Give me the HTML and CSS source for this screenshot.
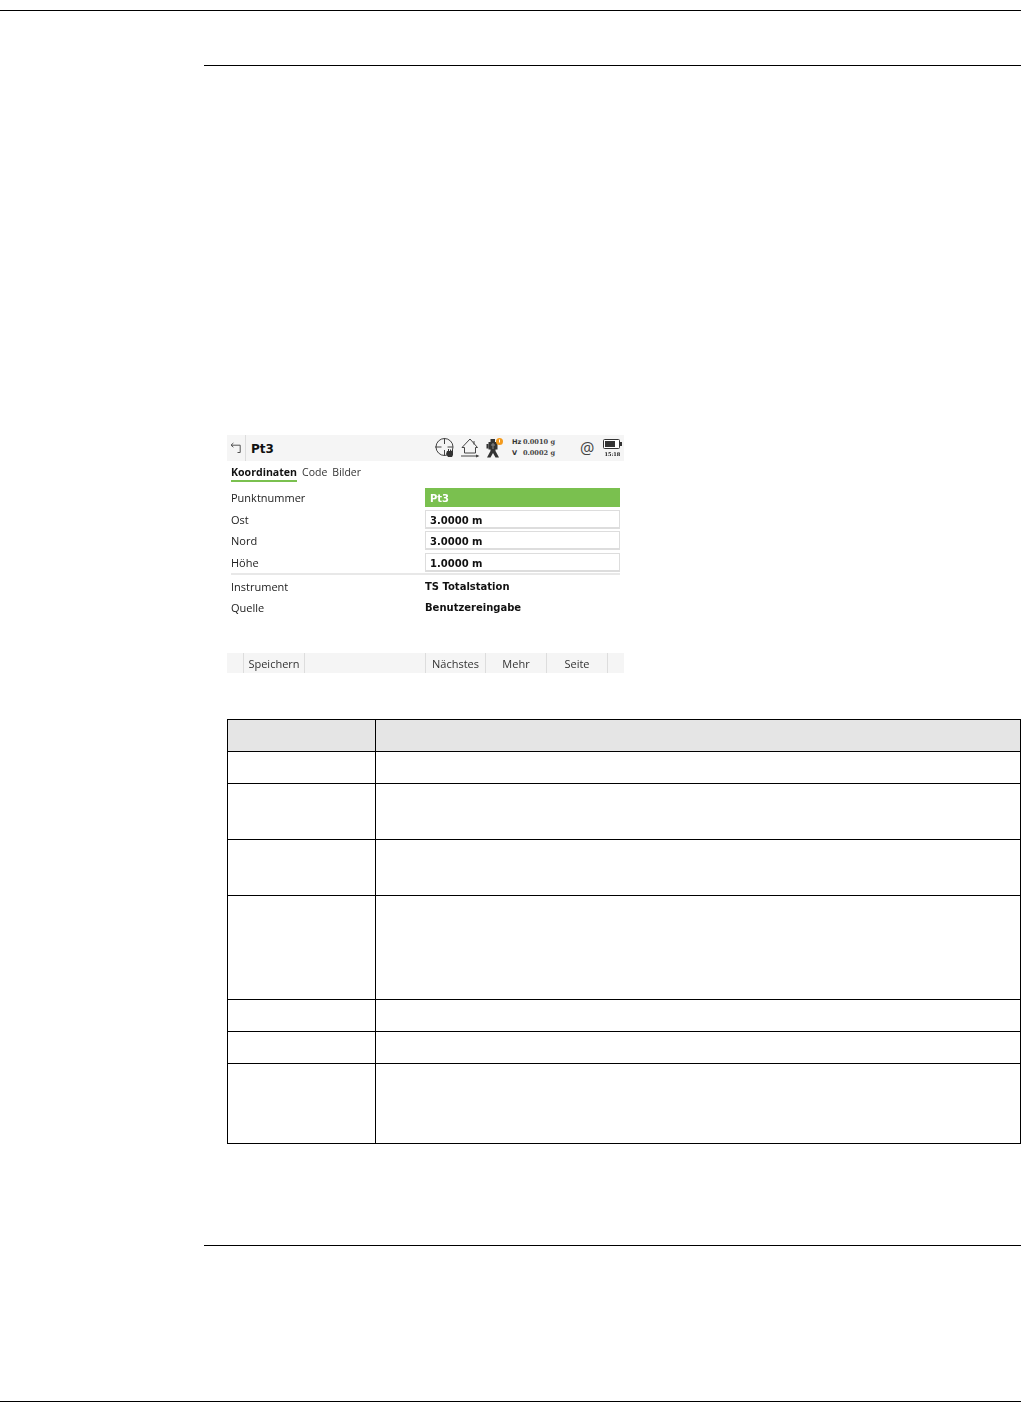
FILE: index.html
```html
<!DOCTYPE html>
<html lang="de">
<head>
<meta charset="utf-8">
<title>Pt3</title>
<link rel="stylesheet" href="styles.css">
</head>
<body>
<div class="page">
  <div class="top-rule"></div>
  <main class="content">
    <section class="screen">
      <header class="titlebar">
        <svg class="back-icon" width="12" height="12" viewBox="0 0 12 12"><path d="M1 3.200H10.200V10.500H7.500M1 3.200L3.400 1M1 3.200L3.400 5.200" fill="none" stroke="#555" stroke-width="1"/></svg>
        <h1 class="title">Pt3</h1>
        <div class="status">
          <svg class="ico-target" width="22" height="20" viewBox="0 0 22 20"><circle cx="9.500" cy="9" r="8.500" fill="none" stroke="#444" stroke-width="1"/><path d="M9.500 0V6M9.500 12V18M0 9H6.500M12.500 9H18" stroke="#444" stroke-width="1"/><path d="M12 13h1v-2h1v2h1v-1.500h1V13h1v-1h1v5l-1 2h-4l-2-3z" fill="#333"/></svg>
          <svg class="ico-home" width="20" height="20" viewBox="0 0 20 20"><path d="M2 9.500L10 1L17.500 9.500H15.500V15H4.500V9.500Z M14 3V6.500" fill="none" stroke="#444" stroke-width="1"/><path d="M1 18H18" stroke="#444" stroke-width="1"/><path d="M16 16.500L19.500 18L16 19.500Z" fill="#444"/></svg>
          <svg class="ico-station" width="20" height="20" viewBox="0 0 20 20"><path d="M4.500 1H9V4H11.500V11.500H9.500V13L13 19.500H9.500L7 15L4.500 19.500H1L4.500 13V11.500H2.500V4H4.500Z" fill="#333"/><rect x="0.500" y="6" width="2" height="4.500" fill="#333"/><path d="M7 5V11M5 7H9" stroke="#888" stroke-width="1"/><circle cx="13.500" cy="3.500" r="3.500" fill="#f39a1d"/><rect x="13" y="1.500" width="1" height="3" fill="#fff"/></svg>
          <div class="angles">
            <div class="angle"><span class="angle-label">Hz</span><span>0.0010 g</span></div>
            <div class="angle"><span class="angle-label">V</span><span>0.0002 g</span></div>
          </div>
          <span class="at">@</span>
          <div class="battery-box">
            <svg width="19" height="10" viewBox="0 0 19 10"><rect x="0.500" y="0.500" width="16" height="9" rx="1" fill="#fff" stroke="#333"/><rect x="2" y="2" width="10" height="6" fill="#333"/><rect x="17" y="3" width="2" height="4" fill="#333"/></svg>
            <span class="clock">15:18</span>
          </div>
        </div>
      </header>
      <nav class="tabs">
        <span class="tab tab-active">Koordinaten</span>
        <span class="tab">Code</span>
        <span class="tab">Bilder</span>
      </nav>
      <div class="form">
        <div class="row"><span class="label">Punktnummer</span><span class="field field-active">Pt3</span></div>
        <div class="row"><span class="label">Ost</span><span class="field">3.0000 m</span></div>
        <div class="row"><span class="label">Nord</span><span class="field">3.0000 m</span></div>
        <div class="row"><span class="label">Höhe</span><span class="field">1.0000 m</span></div>
      </div>
      <div class="separator"></div>
      <div class="info">
        <div class="row"><span class="label">Instrument</span><span class="value">TS Totalstation</span></div>
        <div class="row"><span class="label">Quelle</span><span class="value">Benutzereingabe</span></div>
      </div>
      <footer class="softkeys">
        <span class="key key-save">Speichern</span>
        <span class="key-gap"></span>
        <span class="key key-next">Nächstes</span>
        <span class="key">Mehr</span>
        <span class="key">Seite</span>
      </footer>
    </section>
    <table class="params">
      <colgroup><col class="col-a"><col class="col-b"></colgroup>
      <thead><tr class="r-head"><th></th><th></th></tr></thead>
      <tbody>
        <tr class="r-1"><td></td><td></td></tr>
        <tr class="r-2"><td></td><td></td></tr>
        <tr class="r-2"><td></td><td></td></tr>
        <tr class="r-4"><td></td><td></td></tr>
        <tr class="r-1"><td></td><td></td></tr>
        <tr class="r-1"><td></td><td></td></tr>
        <tr class="r-3"><td></td><td></td></tr>
      </tbody>
    </table>
    <div class="content-rule"></div>
  </main>
  <div class="bottom-rule"></div>
</div>
</body>
</html>
```
FILE: styles.css
```css
* { box-sizing: border-box; }
html, body { margin: 0; padding: 0; background: #fff; }
body { font-family: "Open Sans", "Liberation Sans", sans-serif; color: #111; }
.page { width: 1021px; height: 1402px; overflow: hidden; display: flex; flex-direction: column; padding-top: 10px; }
.top-rule { border-top: 1px solid #000; }
.bottom-rule { border-top: 1px solid #000; margin-top: auto; }
.content { margin: 54px 0 0 204px; border-top: 1px solid #000; padding-top: 369px; }
.content-rule { border-top: 1px solid #000; margin-top: 101px; }

.screen { margin-left: 23px; width: 397px; height: 238px; display: flex; flex-direction: column; font-size: 11px; filter: blur(0.25px); }
.titlebar { height: 26px; background: #f5f5f5; display: flex; align-items: center; padding-left: 3px; flex: none; }
.back-icon { flex: none; margin-right: 3px; }
.title { margin: 0; padding-left: 5px; border-left: 1px solid #ddd; height: 26px; line-height: 28px; font-size: 12px; font-weight: 700; font-family: "DejaVu Sans", sans-serif; }
.status { margin-left: 161px; display: flex; align-items: center; flex: none; }
.ico-target { margin-right: 3px; }
.ico-home { margin-right: 6px; }
.ico-station { margin-right: 6px; }
.angles { width: 68px; font-family: "DejaVu Serif", serif; font-size: 6.600px; font-weight: 700; line-height: 11px; color: #444; }
.angle { display: flex; gap: 1px; }
.angle-label { width: 10px; font-family: "DejaVu Sans", sans-serif; font-weight: 700; color: #333; }
.at { font-size: 16px; color: #444; line-height: 20px; width: 16px; margin-right: 7px; }
.battery-box { display: flex; flex-direction: column; align-items: center; line-height: 7px; }
.clock { font-family: "DejaVu Serif", serif; font-size: 5px; font-weight: 700; margin-top: 2px; }

.tabs { display: flex; gap: 5px; padding: 4px 0 0 4px; height: 27px; flex: none; line-height: 15px; align-items: baseline; }
.tab { height: 17px; font-size: 10.500px; color: #333; }
.tab-active { font-size: 10.600px; font-weight: 700; color: #111; border-bottom: 2px solid #7ac04f; }

.form { display: flex; flex-direction: column; gap: 2.650px; flex: none; }
.row { display: grid; grid-template-columns: 194px 195px; padding-left: 4px; align-items: center; height: 19px; }
.label { color: #222; }
.field { height: 19px; line-height: 19px; padding-left: 4px; border: 1px solid #ddd; border-bottom-width: 2px; font-family: "DejaVu Sans", sans-serif; font-size: 10px; font-weight: 700; color: #111; }
.field-active { border: 0; background: #7ac04f; color: #fff; line-height: 21px; padding-left: 5px; }
.separator { height: 2px; background: #e8e8e8; margin: 1.500px 4px 1.500px; flex: none; }
.info { display: flex; flex-direction: column; gap: 2.500px; }
.value { font-family: "DejaVu Sans", sans-serif; font-size: 10px; font-weight: 700; color: #111; }

.softkeys { margin-top: auto; height: 20px; background: #f5f5f5; display: flex; align-items: center; padding-left: 16px; flex: none; line-height: 22px; font-size: 11px; color: #333; }
.key { width: 61px; height: 20px; text-align: center; border-right: 1px solid #ddd; }
.key-save { width: 62px; border-left: 1px solid #ddd; }
.key-gap { width: 121px; border-right: 1px solid #ddd; height: 20px; }
.key-next { width: 60px; }

.params { margin: 46px 0 0 23px; width: 794px; border-collapse: separate; border-spacing: 0; table-layout: fixed; }
.col-a { width: 149px; }
.col-b { width: 645px; }
.params th, .params td { padding: 0; border-right: 1px solid #000; border-bottom: 1px solid #000; }
.params th:first-child, .params td:first-child { border-left: 1px solid #000; }
.params th { border-top: 1px solid #000; background: #e5e5e5; }
.r-head { height: 33px; }
.r-1 { height: 32px; }
.r-2 { height: 56px; }
.r-3 { height: 80px; }
.r-4 { height: 104px; }
```
